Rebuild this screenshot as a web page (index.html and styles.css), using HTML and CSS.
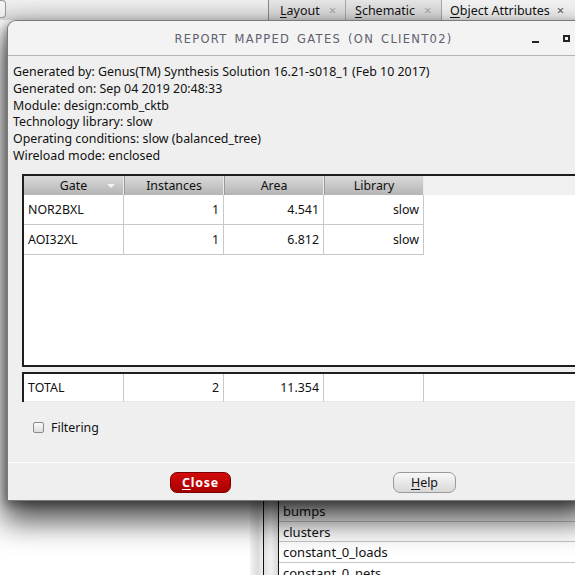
FILE: index.html
```html
<!DOCTYPE html>
<html>
<head>
<meta charset="utf-8">
<link rel="stylesheet" href="styles.css">
</head>
<body>
<div class="app">
  <div class="topbar">
    <div class="tool-left"></div>
    <div class="spacer"></div>
    <div class="tabs">
      <div class="tab"><span><u>L</u>ayout</span><span class="x">×</span></div>
      <div class="tab"><span><u>S</u>chematic</span><span class="x">×</span></div>
      <div class="tab active"><span><u>O</u>bject Attributes</span><span class="x">×</span></div>
    </div>
  </div>
  <div class="main">
    <div class="leftpane"></div>
    <div class="strips">
      <div class="strip s1"></div>
      <div class="strip line"></div>
      <div class="strip s2"></div>
      <div class="strip line"></div>
    </div>
    <div class="list">
      <div class="item">bumps</div>
      <div class="item">clusters</div>
      <div class="item">constant_0_loads</div>
      <div class="item">constant_0_nets</div>
    </div>
  </div>
</div>

<div class="dialog">
  <div class="titlebar">
    <div class="title">Report Mapped Gates (on client02)</div>
    <div class="wbtns"><span class="min"></span><span class="max"></span></div>
  </div>
  <div class="body">
    <div class="info">
      <div>Generated by: Genus(TM) Synthesis Solution 16.21-s018_1 (Feb 10 2017)</div>
      <div>Generated on: Sep 04 2019 20:48:33</div>
      <div>Module: design:comb_cktb</div>
      <div>Technology library: slow</div>
      <div>Operating conditions: slow (balanced_tree)</div>
      <div>Wireload mode: enclosed</div>
    </div>
    <div class="grid">
      <div class="hdr">
        <div class="hc">Gate<span class="sort"></span></div>
        <div class="hc">Instances</div>
        <div class="hc">Area</div>
        <div class="hc">Library</div>
        <div class="hfill"></div>
      </div>
      <div class="row">
        <div class="c l">NOR2BXL</div>
        <div class="c r">1</div>
        <div class="c r">4.541</div>
        <div class="c r">slow</div>
      </div>
      <div class="row">
        <div class="c l">AOI32XL</div>
        <div class="c r">1</div>
        <div class="c r">6.812</div>
        <div class="c r">slow</div>
      </div>
    </div>
    <div class="totals">
      <div class="row trow">
        <div class="c l">TOTAL</div>
        <div class="c r">2</div>
        <div class="c r">11.354</div>
        <div class="c r"></div>
        <div class="c fill"></div>
      </div>
    </div>
    <label class="filter"><span class="cb"></span>Filtering</label>
  </div>
  <div class="buttons">
    <div class="btn close"><u>C</u>lose</div>
    <div class="btn help"><u>H</u>elp</div>
  </div>
</div>
</body>
</html>
```
FILE: styles.css
```css
* { box-sizing: border-box; }
html, body { margin: 0; padding: 0; }
body {
  width: 575px;
  height: 575px;
  overflow: hidden;
  position: relative;
  background: #ffffff;
  font-family: "Noto Sans", "Open Sans", sans-serif;
  font-size: 12px;
  color: #111;
}
u { text-decoration: underline; text-underline-offset: 2px; }

.app { display: flex; flex-direction: column; height: 575px; }
.topbar {
  height: 20px;
  display: flex;
  background: linear-gradient(#f0f0f0, #dedede);
}
.tool-left {
  width: 6px;
  height: 18px;
  border: 1px solid #999;
  border-left: none;
  border-radius: 0 4px 4px 0;
  background: #f4f4f4;
}
.spacer { flex: 1; }
.tabs { display: flex; width: 307px; flex: none; border-left: 1px solid #888; }
.tab {
  display: flex;
  align-items: center;
  gap: 9px;
  padding: 0 0 0 11px;
  height: 20px;
  background: linear-gradient(#e6e6e6, #d6d6d6);
  border-right: 1px solid #a8a8a8;
  font-size: 12.5px;
  color: #111;
  white-space: nowrap;
  flex: none;
}
.tab:nth-child(1) { width: 77px; }
.tab:nth-child(2) { width: 96px; padding-left: 9px; }
.tab.active { flex: 1; background: #f2f2f2; border-right: none; padding-left: 8px; gap: 7px; }
.tab .x { color: #a8a8a8; font-size: 13px; }
.tab.active .x { color: #555; }

.main { flex: 1; display: flex; }
.leftpane { width: 250px; background: #fff; }
.strips { display: flex; width: 29px; }
.strip.s1 { width: 13px; background: linear-gradient(90deg, #f4f4f4, #dcdcdc 60%, #eeeeee); }
.strip.line { width: 1px; background: #111; }
.strip.s2 { width: 14px; background: linear-gradient(90deg, #e2e2e2, #f2f2f2 50%, #d8d8d8); }
.list { flex: 1; padding-top: 481px; background: #fff; }
.item {
  height: 20.5px;
  line-height: 20px;
  padding-left: 4px;
  border-bottom: 1px solid #c6c6c6;
  font-size: 13px;
  color: #111;
}

.dialog {
  position: absolute;
  left: 7px;
  top: 20px;
  width: 580px;
  height: 481px;
  background: #efefef;
  border: 1px solid #7a7a7a;
  border-right: none;
  border-radius: 9px 0 0 0;
  box-shadow: 0 16px 30px 4px rgba(0,0,0,0.7), -2px 4px 10px rgba(0,0,0,0.35);
  display: flex;
  flex-direction: column;
}
.titlebar {
  height: 35px;
  flex: none;
  display: flex;
  align-items: center;
  background: #f3f3f3;
  border-bottom: 1px solid #b4b4b4;
  border-radius: 9px 0 0 0;
}
.title {
  flex: 1;
  text-align: center;
  padding-left: 94px;
  font-family: "DejaVu Sans", sans-serif;
  text-transform: uppercase;
  font-size: 11.5px;
  letter-spacing: 1.3px;
  word-spacing: 2px;
  color: #60606e;
  margin-top: 1px;
  white-space: nowrap;
}
.wbtns { display: flex; align-items: center; width: 62px; gap: 24px; padding-left: 7px; }
.wbtns .min { width: 7px; height: 2px; background: #222; margin-top: 7px; }
.wbtns .max { width: 7px; height: 7px; border: 2px solid #222; }

.body { flex: 1; padding: 8px 0 0 5px; display: flex; flex-direction: column; }
.info div { height: 16.8px; line-height: 16.8px; font-size: 12.4px; color: #111; white-space: nowrap; }

.grid {
  margin: 9px 0 0 9px;
  height: 193px;
  border-top: 2px solid #1e1e1e;
  border-left: 2px solid #1e1e1e;
  border-bottom: 2px solid #1e1e1e;
  background: #fff;
}
.hdr { display: flex; height: 19px; background: #f0f0f0; }
.hc {
  width: 100px;
  height: 19px;
  line-height: 19px;
  text-align: center;
  background: linear-gradient(#dadada, #b4b4b4);
  border-right: 1px solid #ebebeb;
  border-left: 1px solid #9a9a9a;
  font-size: 12.4px;
  color: #111;
  position: relative;
}
.hc:first-child { border-left: none; }
.sort {
  position: absolute;
  right: 8px;
  top: 8px;
  width: 0; height: 0;
  border-left: 4px solid transparent;
  border-right: 4px solid transparent;
  border-top: 4px solid #f4f4f4;
}
.hfill { flex: 1; }
.row { display: flex; height: 30px; }
.c {
  width: 100px;
  height: 30px;
  line-height: 30px;
  padding: 0 4px;
  border-right: 1px solid #c8c8c8;
  border-bottom: 1px solid #c8c8c8;
  font-size: 12.4px;
  color: #111;
  background: #fff;
}
.c.r { text-align: right; }
.c.l { padding-left: 4px; }

.totals {
  margin: 5px 0 0 9px;
  height: 30px;
  flex: none;
  border-top: 2px solid #1e1e1e;
  border-left: 2px solid #1e1e1e;
  overflow: hidden;
  background: #fff;
}
.trow .c { height: 28px; line-height: 28px; border-bottom: 1px solid #e8e8e8; }
.trow .c.fill { flex: 1; border-right: none; }

.filter {
  display: flex;
  align-items: center;
  gap: 7px;
  margin: 17px 0 0 20px;
  font-size: 12.4px;
  color: #111;
}
.cb {
  width: 11px; height: 11px;
  border: 1px solid #8a8a8a;
  border-radius: 2px;
  background: linear-gradient(#fafafa, #dedede);
}

.buttons {
  height: 38px;
  flex: none;
  display: flex;
  align-items: center;
  border-top: 1px solid #ffffff;
  padding-left: 162px;
  gap: 162px;
}
.btn {
  height: 21px;
  border-radius: 7px;
  display: flex;
  align-items: center;
  justify-content: center;
  font-size: 12.4px;
  margin-top: 1px;
}
.btn.close {
  width: 61px;
  background: linear-gradient(#d40a0a, #a80000);
  border: 1px solid #7a0000;
  color: #fff;
  font-weight: bold;
  letter-spacing: 0.8px;
}
.btn.help {
  width: 63px;
  background: linear-gradient(#f8f8f8, #d8d8d8);
  border: 1px solid #9a9a9a;
  color: #111;
}
```
